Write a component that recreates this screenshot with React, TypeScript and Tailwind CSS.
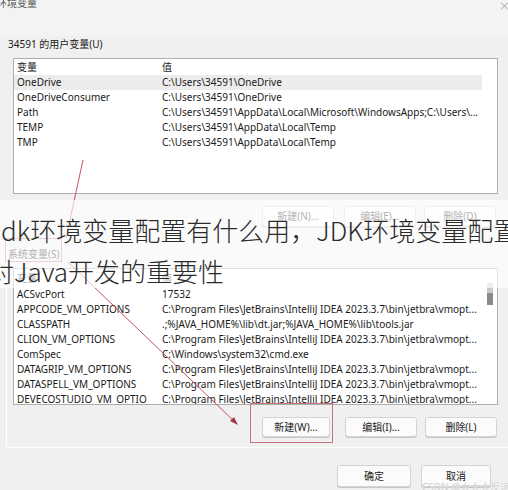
const userVars: [string, string][] = [
  ['OneDrive', 'C:\\Users\\34591\\OneDrive'],
  ['OneDriveConsumer', 'C:\\Users\\34591\\OneDrive'],
  ['Path', 'C:\\Users\\34591\\AppData\\Local\\Microsoft\\WindowsApps;C:\\Users\\...'],
  ['TEMP', 'C:\\Users\\34591\\AppData\\Local\\Temp'],
  ['TMP', 'C:\\Users\\34591\\AppData\\Local\\Temp'],
];

const jetbra = 'C:\\Program Files\\JetBrains\\IntelliJ IDEA 2023.3.7\\bin\\jetbra\\vmopt...';

const sysVars: [string, string][] = [
  ['ACSvcPort', '17532'],
  ['APPCODE_VM_OPTIONS', jetbra],
  ['CLASSPATH', '.;%JAVA_HOME%\\lib\\dt.jar;%JAVA_HOME%\\lib\\tools.jar'],
  ['CLION_VM_OPTIONS', jetbra],
  ['ComSpec', 'C:\\Windows\\system32\\cmd.exe'],
  ['DATAGRIP_VM_OPTIONS', jetbra],
  ['DATASPELL_VM_OPTIONS', jetbra],
  ['DEVECOSTUDIO_VM_OPTIO', jetbra],
];

function Row({ name, value, active }: { name: string; value: string; active?: boolean }) {
  return (
    <div className={`flex h-[15px] w-[468px] items-center whitespace-nowrap ${active ? 'bg-[#ececec]' : ''}`}>
      <div className="w-[148px] shrink-0 overflow-hidden pl-[3px]">{name}</div>
      <div className="overflow-hidden">{value}</div>
    </div>
  );
}

function Btn({ children, className = '' }: { children: React.ReactNode; className?: string }) {
  return (
    <div
      className={`flex h-full shrink-0 items-center justify-center rounded-[3px] border border-[#d4d4d4] bg-[#fbfbfb] shadow-[0_1px_0_#c8c8c8] ${className}`}
    >
      {children}
    </div>
  );
}

export default function App() {
  return (
    <div className="relative h-[490px] w-[508px] overflow-hidden bg-[#f0f0f0] font-['Noto_Sans','Noto_Sans_CJK_SC',sans-serif] text-[10px] text-[#1a1a1a]">
      {/* title bar */}
      <div className="flex h-[36px] items-start justify-between bg-[#f3f3f3]">
        <div className="-ml-[3px] -mt-[3px] text-[10px] leading-[12px] text-[#555]">环境变量</div>
        <svg width="8" height="10" viewBox="0 0 8 10" className="mt-[1px]">
          <path d="M1 1.5 L8 8.5 M8 1.5 L1 8.5" stroke="#888" strokeWidth="0.8" />
        </svg>
      </div>

      <div className="h-[16px] pl-[8px] leading-[16px]">34591 的用户变量(U)</div>

      <div className="ml-[13px] mt-[6px] h-[136px] w-[485px] overflow-hidden border border-[#adadad] bg-white">
        <div className="flex h-[16px] items-center">
          <div className="w-[148px] pl-[3px]">变量</div>
          <div>值</div>
        </div>
        {userVars.map(([n, v], i) => (
          <Row key={n} name={n} value={v} active={i === 0} />
        ))}
      </div>

      <div className="mt-[12px] flex h-[21px]">
        <Btn className="ml-[262px] w-[72px]">新建(N)...</Btn>
        <Btn className="ml-[10px] w-[72px]">编辑(E)...</Btn>
        <Btn className="ml-[8px] w-[72px]">删除(D)</Btn>
      </div>

      {/* system variables group */}
      <div className="ml-[6px] border-b border-l border-white pb-[10px]">
        <div className="relative mt-[19px] h-[16px] pl-[1px] leading-[16px]">
          系统变量(S)
          <div className="absolute -left-[2px] -top-[8px] h-[24px] w-[57px] border border-[#d4757e]" />
        </div>

        <div className="ml-[6px] mt-[6px] flex h-[137px] w-[485px] overflow-hidden border border-[#adadad] bg-white">
          <div className="w-[470px] shrink-0">
            <div className="flex h-[18px] items-center">
              <div className="w-[148px] pl-[3px]">变量</div>
              <div>值</div>
            </div>
            {sysVars.map(([n, v]) => (
              <Row key={n} name={n} value={v} />
            ))}
          </div>
          <div className="ml-[3px] mt-[14px] w-[6px]">
            <div className="h-[10px] bg-[#cacaca]" />
            <div className="h-[12px] bg-[#8a8a8a]" />
          </div>
        </div>

        <div className="relative mt-[12px] flex h-[20px]">
          <Btn className="ml-[255px] w-[68px]">新建(W)...</Btn>
          <Btn className="ml-[15px] w-[72px]">编辑(I)...</Btn>
          <Btn className="ml-[8px] w-[72px]">删除(L)</Btn>
          <div className="absolute left-[243px] -top-[14px] h-[40px] w-[83px] border-[1.5px] border-[#c8737b]" />
        </div>
      </div>

      <div className="mt-[17px] flex h-[22px]">
        <Btn className="ml-[337px] w-[74px]">确定</Btn>
        <Btn className="ml-[10px] w-[70px]">取消</Btn>
      </div>

      {/* annotation arrows */}
      <svg className="pointer-events-none absolute left-0 top-0" width="508" height="490" viewBox="0 0 508 490">
        <line x1="83" y1="160" x2="66" y2="238" stroke="#c4545d" strokeWidth="1" />
        <line x1="68" y1="262" x2="236" y2="423" stroke="#c4545d" strokeWidth="1" />
        <polygon points="238,425 230,421 234,417" fill="#9b3b44" />
      </svg>

      {/* caption overlay */}
      <div className="absolute left-0 right-0 top-[200px] h-[88px] bg-white/65 pt-[8.5px] font-['Noto_Sans_CJK_SC',sans-serif] text-[26px] font-light leading-[41.5px] text-[#2a2a2a] whitespace-nowrap">
        <div className="ml-[1px]">dk环境变量配置有什么用，JDK环境变量配置</div>
        <div className="-ml-[12px]">对Java开发的重要性</div>
      </div>

      <div className="absolute -bottom-[3px] left-[422px] whitespace-nowrap text-[10px] leading-[12px] text-[#cfcfcf] [text-shadow:0_0_1px_#fff]">
        CSDN @大大大反派
      </div>
    </div>
  );
}
